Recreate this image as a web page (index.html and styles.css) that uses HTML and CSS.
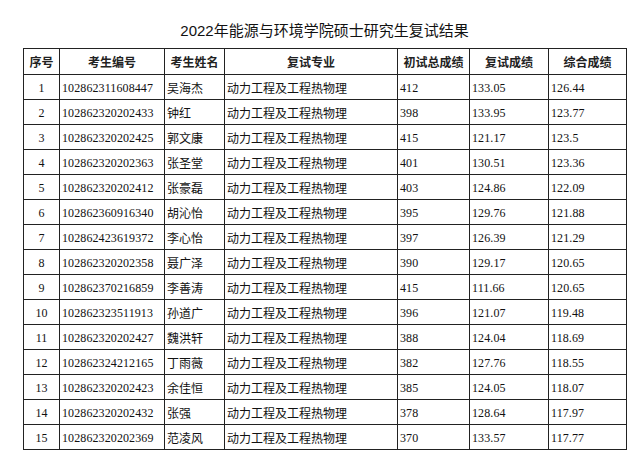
FILE: index.html
```html
<!DOCTYPE html>
<html lang="zh-CN">
<head>
<meta charset="utf-8">
<title>复试结果</title>
<link rel="stylesheet" href="styles.css">
</head>
<body>
<div class="page">
  <h1 class="title">2022年能源与环境学院硕士研究生复试结果</h1>
  <table class="results">
    <colgroup>
      <col class="c-no"><col class="c-id"><col class="c-name"><col class="c-major"><col class="c-s1"><col class="c-s2"><col class="c-s3">
    </colgroup>
    <thead>
      <tr><th>序号</th><th>考生编号</th><th>考生姓名</th><th>复试专业</th><th>初试总成绩</th><th>复试成绩</th><th>综合成绩</th></tr>
    </thead>
    <tbody>
      <tr><td class="no">1</td><td class="num">102862311608447</td><td>吴海杰</td><td>动力工程及工程热物理</td><td class="num">412</td><td class="num">133.05</td><td class="num">126.44</td></tr>
      <tr><td class="no">2</td><td class="num">102862320202433</td><td>钟红</td><td>动力工程及工程热物理</td><td class="num">398</td><td class="num">133.95</td><td class="num">123.77</td></tr>
      <tr><td class="no">3</td><td class="num">102862320202425</td><td>郭文康</td><td>动力工程及工程热物理</td><td class="num">415</td><td class="num">121.17</td><td class="num">123.5</td></tr>
      <tr><td class="no">4</td><td class="num">102862320202363</td><td>张圣堂</td><td>动力工程及工程热物理</td><td class="num">401</td><td class="num">130.51</td><td class="num">123.36</td></tr>
      <tr><td class="no">5</td><td class="num">102862320202412</td><td>张豪磊</td><td>动力工程及工程热物理</td><td class="num">403</td><td class="num">124.86</td><td class="num">122.09</td></tr>
      <tr><td class="no">6</td><td class="num">102862360916340</td><td>胡沁怡</td><td>动力工程及工程热物理</td><td class="num">395</td><td class="num">129.76</td><td class="num">121.88</td></tr>
      <tr><td class="no">7</td><td class="num">102862423619372</td><td>李心怡</td><td>动力工程及工程热物理</td><td class="num">397</td><td class="num">126.39</td><td class="num">121.29</td></tr>
      <tr><td class="no">8</td><td class="num">102862320202358</td><td>聂广泽</td><td>动力工程及工程热物理</td><td class="num">390</td><td class="num">129.17</td><td class="num">120.65</td></tr>
      <tr><td class="no">9</td><td class="num">102862370216859</td><td>李善涛</td><td>动力工程及工程热物理</td><td class="num">415</td><td class="num">111.66</td><td class="num">120.65</td></tr>
      <tr><td class="no">10</td><td class="num">102862323511913</td><td>孙道广</td><td>动力工程及工程热物理</td><td class="num">396</td><td class="num">121.07</td><td class="num">119.48</td></tr>
      <tr><td class="no">11</td><td class="num">102862320202427</td><td>魏洪轩</td><td>动力工程及工程热物理</td><td class="num">388</td><td class="num">124.04</td><td class="num">118.69</td></tr>
      <tr><td class="no">12</td><td class="num">102862324212165</td><td>丁雨薇</td><td>动力工程及工程热物理</td><td class="num">382</td><td class="num">127.76</td><td class="num">118.55</td></tr>
      <tr><td class="no">13</td><td class="num">102862320202423</td><td>余佳恒</td><td>动力工程及工程热物理</td><td class="num">385</td><td class="num">124.05</td><td class="num">118.07</td></tr>
      <tr><td class="no">14</td><td class="num">102862320202432</td><td>张强</td><td>动力工程及工程热物理</td><td class="num">378</td><td class="num">128.64</td><td class="num">117.97</td></tr>
      <tr><td class="no">15</td><td class="num">102862320202369</td><td>范凌风</td><td>动力工程及工程热物理</td><td class="num">370</td><td class="num">133.57</td><td class="num">117.77</td></tr>
    </tbody>
  </table>
</div>
</body>
</html>
```

FILE: styles.css
```css
html, body {
  margin: 0;
  padding: 0;
  background: #fff;
}
body {
  font-family: "Liberation Serif", "Noto Sans CJK SC", serif;
  color: #111;
}
.page {
  width: 603px;
  padding: 22px 0 0 23px;
}
.title {
  margin: 0 0 8px 0;
  height: 18px;
  line-height: 18px;
  font-family: "Liberation Sans", "Noto Sans CJK SC", sans-serif;
  font-size: 15px;
  font-weight: normal;
  text-align: center;
  color: #111;
}
.results {
  border-collapse: collapse;
  table-layout: fixed;
  width: 603px;
  font-size: 12px;
}
.c-no { width: 36px; }
.c-id { width: 105px; }
.c-name { width: 60px; }
.c-major { width: 173px; }
.c-s1 { width: 72px; }
.c-s2 { width: 79px; }
.c-s3 { width: 78px; }
.results th, .results td {
  border: 1px solid #222;
  padding: 0 2px;
  white-space: nowrap;
  overflow: hidden;
  line-height: 16px;
}
.results th {
  height: 24px;
  font-family: "Noto Sans CJK SC", sans-serif;
  font-weight: bold;
  text-align: center;
  color: #222;
  padding-top: 1px;
}
.results td {
  height: 22px;
  text-align: left;
  padding-top: 2px;
  font-family: "Noto Sans CJK SC", sans-serif;
}
.results td.num {
  font-family: "Liberation Serif", serif;
  font-size: 12px;
  letter-spacing: 0.1px;
}
.results td.no {
  text-align: center;
  font-family: "Liberation Serif", serif;
  font-size: 12px;
}
```
